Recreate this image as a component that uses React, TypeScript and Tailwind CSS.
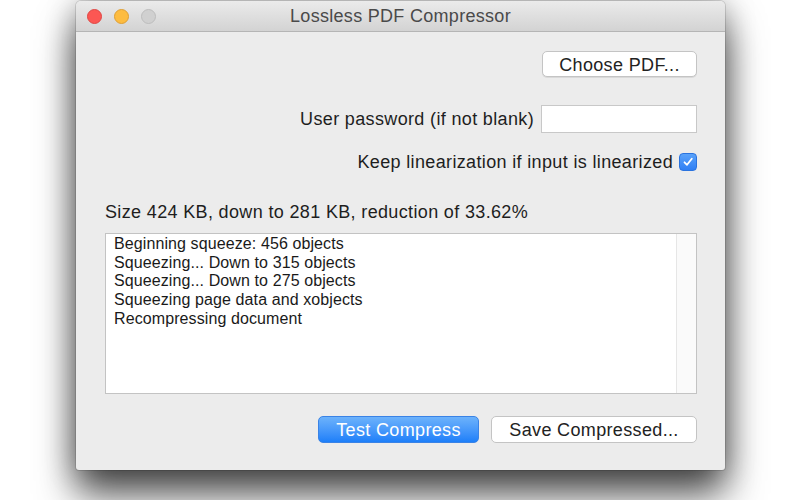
import React from "react";

export default function App() {
  const lines = [
    "Beginning squeeze: 456 objects",
    "Squeezing... Down to 315 objects",
    "Squeezing... Down to 275 objects",
    "Squeezing page data and xobjects",
    "Recompressing document",
  ];
  return (
    <div
      className="w-[800px] h-[500px] bg-white overflow-hidden text-[#1e1e1e] pt-[1px]"
      style={{ fontFamily: '"Liberation Sans", Arial, sans-serif' }}
    >
      <div className="ml-[76px] w-[649px] h-[469px] bg-[#ececec] rounded-t-[5px] rounded-b-[3px] flex flex-col shadow-[0_24px_38px_rgba(0,0,0,0.7),0_0_30px_rgba(0,0,0,0.28),0_0_0_1px_rgba(0,0,0,0.12)]">
        {/* Title bar */}
        <div className="relative h-[31px] shrink-0 rounded-t-[5px] bg-gradient-to-b from-[#ebebeb] to-[#d3d3d3] border-b border-[#b5b5b5] flex items-center justify-center">
          <div className="absolute left-[11px] top-[8px] flex gap-[12px]">
            <div className="w-[15px] h-[15px] rounded-full bg-[#fc5753] border border-[#df4744]" />
            <div className="w-[15px] h-[15px] rounded-full bg-[#fdbc40] border border-[#de9f34]" />
            <div className="w-[15px] h-[15px] rounded-full bg-[#d0d0d0] border border-[#bdbdbd]" />
          </div>
          <span className="text-[18px] tracking-[0.3px] text-[#4a4a4a]">Lossless PDF Compressor</span>
        </div>

        {/* Content */}
        <div className="flex flex-col pl-[29px] pr-[28px] text-[18px] tracking-[0.35px]">
          <div className="flex justify-end mt-[19px]">
            <button className="w-[155px] h-[26px] bg-white border border-[#c4c4c4] rounded-[5px] text-[#222] shadow-[0_1px_0_rgba(0,0,0,0.08)]">
              Choose PDF...
            </button>
          </div>

          <div className="flex justify-end items-center mt-[28px] gap-[7px]">
            <span>User password (if not blank)</span>
            <div className="w-[156px] h-[28px] bg-white border border-[#c8c8c8]" />
          </div>

          <div className="flex justify-end items-center mt-[19px] h-[20px] gap-[6px]">
            <span>Keep linearization if input is linearized</span>
            <div className="w-[18px] h-[18px] rounded-[4px] bg-gradient-to-b from-[#5aa2fa] to-[#2f7ff4] border border-[#2a73df] flex items-center justify-center">
              <svg width="12" height="12" viewBox="0 0 12 12">
                <path d="M2.5 6.3 L5 8.8 L9.8 2.8" stroke="white" strokeWidth="1.8" fill="none" strokeLinecap="round" strokeLinejoin="round" />
              </svg>
            </div>
          </div>

          <div className="mt-[30px] h-[20px] flex items-center">
            Size 424 KB, down to 281 KB, reduction of 33.62%
          </div>

          <div className="mt-[11px] h-[161px] bg-white border border-[#c3c3c3] flex">
            <div className="flex-1 pl-[8px] pt-[1px] text-[16px] tracking-[0.1px] leading-[18.7px] text-[#1a1a1a]">
              {lines.map((l) => (
                <div key={l}>{l}</div>
              ))}
            </div>
            <div className="w-[20px] bg-[#fafafa] border-l border-[#e6e6e6]" />
          </div>

          <div className="flex justify-end gap-[12px] mt-[22px]">
            <button className="w-[161px] h-[27px] rounded-[5px] bg-gradient-to-b from-[#6cb2fb] to-[#1c7ff9] border border-[#3a83e6] text-white">
              Test Compress
            </button>
            <button className="w-[206px] h-[27px] rounded-[5px] bg-white border border-[#c4c4c4] text-[#222]">
              Save Compressed...
            </button>
          </div>
        </div>
      </div>
    </div>
  );
}
